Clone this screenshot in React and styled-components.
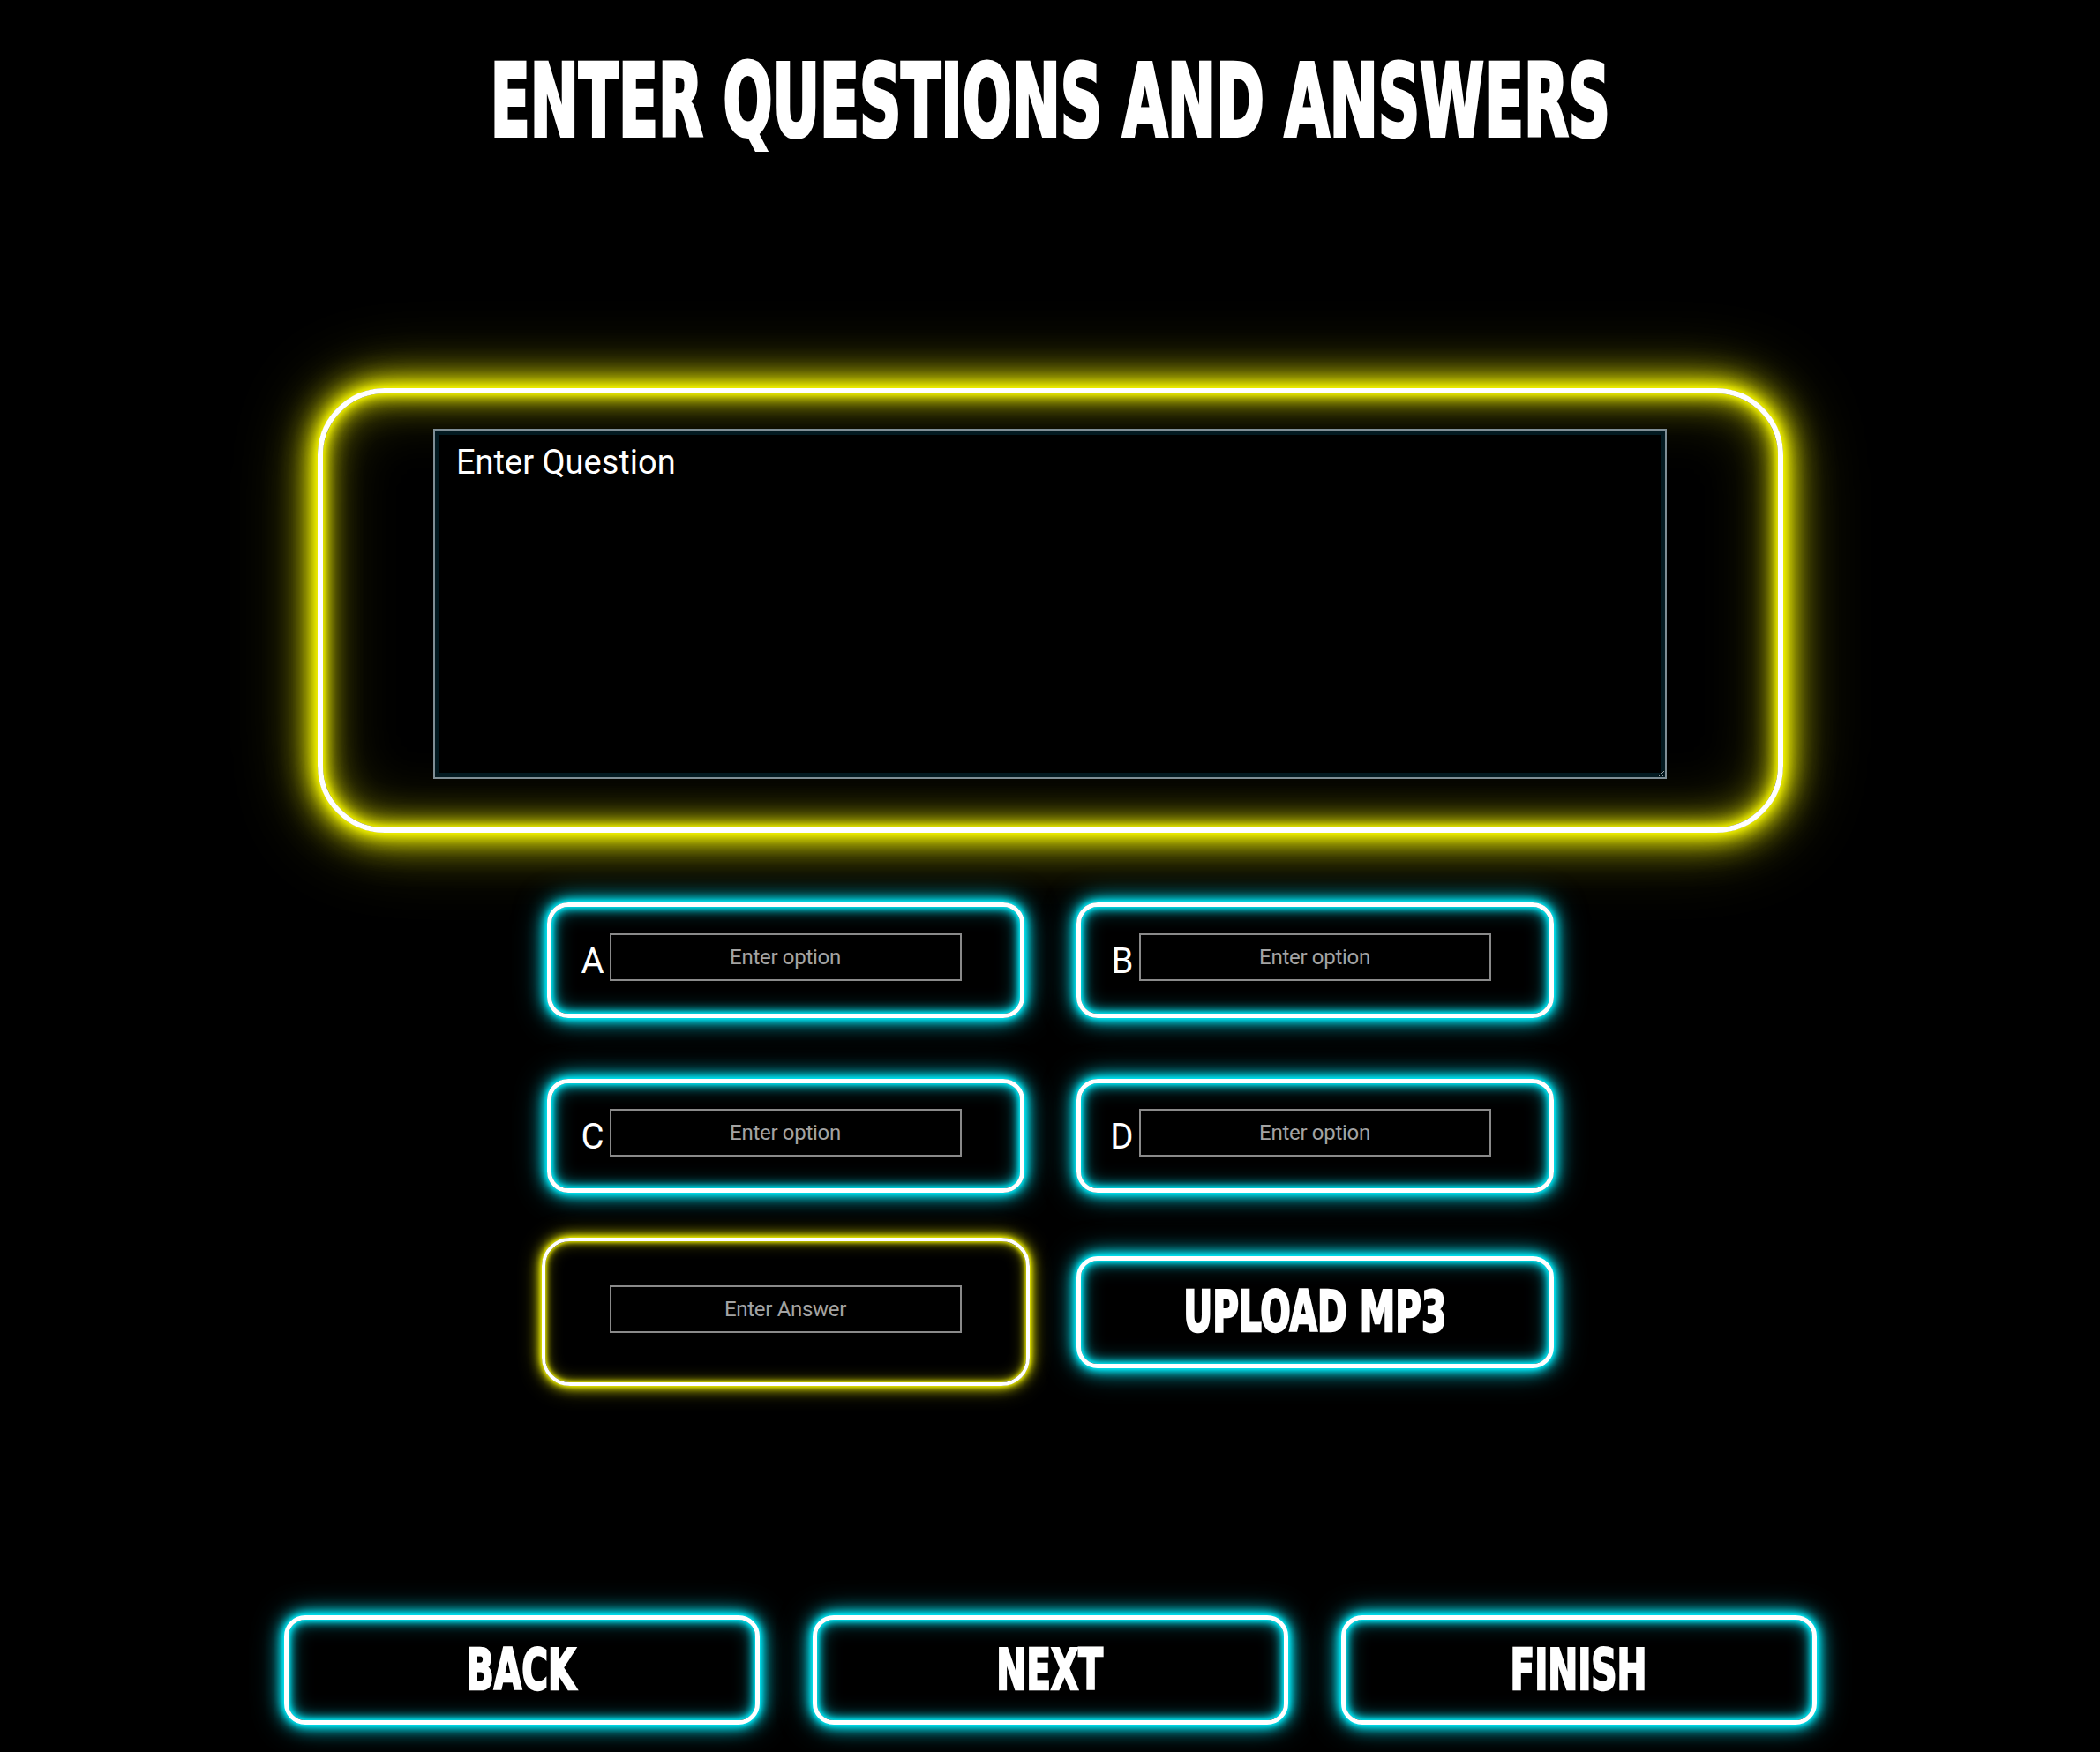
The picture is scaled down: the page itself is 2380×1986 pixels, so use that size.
import React from 'react';
import styled, { createGlobalStyle, css } from 'styled-components';

const CYAN = '#00e8f6';
const YELLOW = '#f4f400';

const GlobalStyle = createGlobalStyle`
  html, body {
    margin: 0;
    background: #000;
  }
  body {
    font-family: Roboto, "Noto Sans", "Liberation Sans", sans-serif;
    color: #fff;
  }
`;

const cyanGlow = css`
  border: 5px solid #fff;
  box-shadow: 0 0 4px ${CYAN}, 0 0 8px ${CYAN}, 0 0 14px ${CYAN}, 0 0 22px ${CYAN},
    0 0 36px rgba(0, 190, 210, 0.55), inset 0 0 4px ${CYAN}, inset 0 0 8px ${CYAN},
    inset 0 0 14px ${CYAN}, inset 0 0 24px rgba(0, 200, 220, 0.6);
`;

const impact = css`
  font-family: "Liberation Sans Narrow", "DejaVu Sans Condensed", "Liberation Sans", sans-serif;
  font-weight: 700;
  color: #fff;
  -webkit-text-stroke: 2.5px #fff;
  letter-spacing: 0;
`;

const Page = styled.main`
  min-height: 1986px;
  box-sizing: border-box;
  display: flex;
  flex-direction: column;
  align-items: center;
  padding-top: 58px;
`;

const Title = styled.h1`
  margin: 0;
  height: 116px;
  font-size: 114px;
  line-height: 1;
  white-space: nowrap;
  ${impact}
  -webkit-text-stroke: 4px #fff;

  span {
    display: inline-block;
    transform: scaleX(0.642);
    transform-origin: center;
  }
`;

const QuestionPanel = styled.section`
  margin-top: 266px;
  width: 1661px;
  height: 504px;
  box-sizing: border-box;
  border: 6px solid #fff;
  border-radius: 76px;
  display: flex;
  justify-content: center;
  align-items: flex-start;
  padding-top: 40px;
  box-shadow: 0 0 6px ${YELLOW}, 0 0 14px ${YELLOW}, 0 0 26px ${YELLOW}, 0 0 40px ${YELLOW},
    0 0 60px rgba(220, 220, 0, 0.7), 0 0 95px rgba(200, 200, 0, 0.4),
    inset 0 0 6px ${YELLOW}, inset 0 0 14px ${YELLOW}, inset 0 0 26px ${YELLOW},
    inset 0 0 45px rgba(220, 220, 0, 0.7), inset 0 0 80px rgba(200, 200, 0, 0.35);
`;

const QuestionInput = styled.textarea`
  width: 1398px;
  height: 397px;
  box-sizing: border-box;
  margin: 0;
  background: #000;
  color: #fff;
  border: 2px solid #7f8e95;
  box-shadow: inset 0 0 0 5px #031a21;
  padding: 14px 24px;
  font-family: Roboto, "Noto Sans", sans-serif;
  font-size: 38px;
  outline: none;

  &::placeholder {
    color: #fff;
    opacity: 1;
  }
`;

const OptionsGrid = styled.section`
  margin-top: 79px;
  display: grid;
  grid-template-columns: 541px 541px;
  grid-template-rows: 131px 147px 168px;
  column-gap: 59px;
  row-gap: 51px;
  align-items: center;
  justify-items: center;
`;

const OptionCard = styled.label`
  ${cyanGlow}
  width: 541px;
  height: ${(p) => p.$h || 130}px;
  box-sizing: border-box;
  border-radius: 24px;
  display: grid;
  grid-template-columns: 1fr 399px 1fr;
  align-items: center;
  align-self: ${(p) => p.$align || 'center'};
  padding-bottom: 8px;
`;

const Letter = styled.span`
  justify-self: end;
  margin-right: 6px;
  margin-top: 10px;
  font-size: 40px;
  line-height: 1;
  color: #fff;
`;

const TextField = styled.input`
  width: 399px;
  height: 54px;
  box-sizing: border-box;
  margin: 0;
  background: transparent;
  border: 2px solid #8a8a8a;
  color: #fff;
  font-family: Roboto, "Noto Sans", sans-serif;
  font-size: 24px;
  letter-spacing: -0.3px;
  text-align: center;
  outline: none;

  &::placeholder {
    color: #a3a3a3;
    opacity: 1;
  }
`;

const AnswerCard = styled.div`
  width: 553px;
  height: 168px;
  box-sizing: border-box;
  border: 4px solid #fff;
  border-radius: 32px;
  display: flex;
  align-items: center;
  justify-content: center;
  padding-bottom: 6px;
  box-shadow: 0 0 4px ${YELLOW}, 0 0 9px ${YELLOW}, 0 0 16px ${YELLOW},
    0 0 26px rgba(220, 220, 0, 0.5), inset 0 0 4px ${YELLOW}, inset 0 0 9px ${YELLOW},
    inset 0 0 18px rgba(220, 220, 0, 0.5);
`;

const NeonButton = styled.button`
  ${cyanGlow}
  width: ${(p) => p.$w || 539}px;
  height: ${(p) => p.$h || 124}px;
  box-sizing: border-box;
  border-radius: 24px;
  background: #000;
  margin: 0;
  padding: 0;
  display: flex;
  align-items: center;
  justify-content: center;
  cursor: pointer;
  ${impact}
  font-size: 64px;
  line-height: 1;

  span {
    display: inline-block;
    transform: scaleX(0.705);
  }
`;

const ButtonRow = styled.nav`
  margin-top: 260px;
  display: flex;
  gap: 60px;
`;

const options = [
  { key: 'A', h: 131, align: 'start' },
  { key: 'B', h: 131, align: 'start' },
  { key: 'C', h: 129, align: 'end' },
  { key: 'D', h: 129, align: 'end' },
];

export default function App() {
  return (
    <>
      <GlobalStyle />
      <Page>
        <Title>
          <span>ENTER QUESTIONS AND ANSWERS</span>
        </Title>

        <QuestionPanel>
          <QuestionInput placeholder="Enter Question" />
        </QuestionPanel>

        <OptionsGrid>
          {options.map((o) => (
            <OptionCard key={o.key} $h={o.h} $align={o.align}>
              <Letter>{o.key}</Letter>
              <TextField type="text" placeholder="Enter option" />
            </OptionCard>
          ))}
          <AnswerCard>
            <TextField type="text" placeholder="Enter Answer" />
          </AnswerCard>
          <NeonButton $w={541} $h={127}>
            <span>UPLOAD MP3</span>
          </NeonButton>
        </OptionsGrid>

        <ButtonRow>
          <NeonButton>
            <span>BACK</span>
          </NeonButton>
          <NeonButton>
            <span>NEXT</span>
          </NeonButton>
          <NeonButton>
            <span>FINISH</span>
          </NeonButton>
        </ButtonRow>
      </Page>
    </>
  );
}
